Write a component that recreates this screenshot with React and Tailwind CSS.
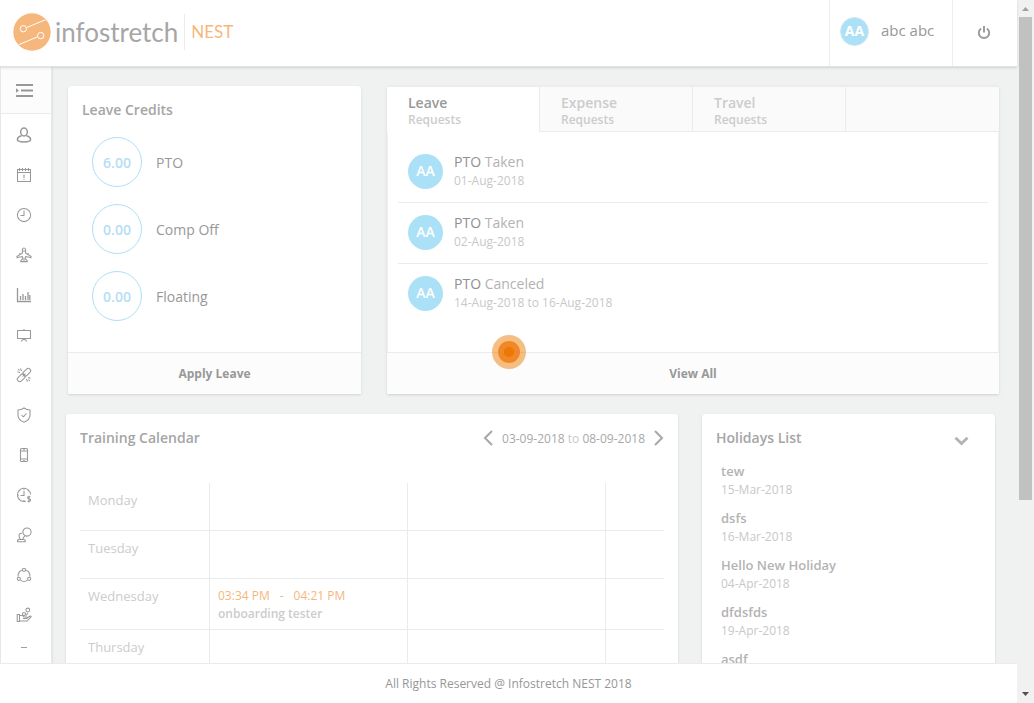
import React from "react";

const iconPaths = {
  Profile: (
    <g strokeWidth="1.5">
      <ellipse cx="8" cy="5" rx="3.3" ry="4" />
      <path d="M5.6 8.8C3 9.6 1.4 10.6 1.4 12.6C1.4 14.4 3 15 8 15S14.6 14.4 14.6 12.6C14.6 10.6 13 9.6 10.4 8.8" />
    </g>
  ),
  Calendar: (
    <>
      <path d="M1.5 2.5H14.5V14.5H1.5ZM1.5 5.5H14.5M8 7.5V11M8 12V13" />
      <path d="M3.5 1V4M6.5 1V4M9.5 1V4M12.5 1V4" />
    </>
  ),
  Timesheet: (
    <>
      <circle cx="8" cy="8" r="6.6" />
      <path d="M8 3.5V8.5H4.5" />
    </>
  ),
  Travel: (
    <>
      <path d="M6.4 6.2V3C6.4 1.8 7.2 1 8 1S9.6 1.8 9.6 3V6.2L15 9.3V10.6L9.6 9.6V12.2L11.2 13.6V14.6H4.8V13.6L6.4 12.2V9.6L1 10.6V9.3ZM8 10.5V15.2" />
      <path d="M6.4 4H9.6M3.8 7.6V6M12.2 7.6V6" />
    </>
  ),
  Reports: (
    <>
      <path d="M1.5 1V14.5H15" strokeWidth="1.3" />
      <path d="M4.5 13V9M7 13V7M9.5 13V9M12 13V5M13.8 13V8" strokeWidth="1.3" />
    </>
  ),
  Desk: <path d="M1.5 3.5H14.5V11.5H1.5ZM8 2V3.5M8 11.5V13M5 14.5L6.5 12.7H9.5L11 14.5" />,
  Links: (
    <>
      <rect x="-4.4" y="-2.4" width="8.8" height="4.8" rx="2.4" transform="translate(10.8 5.2) rotate(-45)" />
      <rect x="-4.4" y="-2.4" width="8.8" height="4.8" rx="2.4" transform="translate(5.2 10.8) rotate(-45)" />
      <path d="M6.5 9.5L9.5 6.5M4 5.5L1.5 4.8M5.5 4L4.5 1.5M3.5 3.5L2 2M12 10.5L14.5 11.2M10.5 12L11.5 14.5M12.5 12.5L14 14" />
    </>
  ),
  Security: (
    <>
      <path d="M8 1C6.3 2.3 4.4 3 2 3V8C2 11.5 4.2 13.8 8 15.2C11.8 13.8 14 11.5 14 8V3C11.6 3 9.7 2.3 8 1Z" />
      <path d="M5.6 8.2L7.4 9.8L10.5 6.5" />
    </>
  ),
  Mobile: (
    <>
      <rect x="4.5" y="1.5" width="7" height="13" rx="1" />
      <path d="M4.5 4H11.5M4.5 12H11.5M7.2 2.8H8.8M7.3 13.5H8.7" />
    </>
  ),
  Payroll: (
    <>
      <path d="M9.8 14.2A6.6 6.6 0 1 1 14.6 7.5M8 3.8V8.5H4.5" />
      <path d="M8 1.5V3M1.5 8H3M8 13V14.5M3.4 3.4L4.2 4.2M12.6 3.4L11.8 4.2" />
      <path d="M14.3 10C13.5 9.3 11.6 9.4 11.6 10.7S14.6 11.6 14.6 13.1S12.3 14.7 11.4 13.8M13 8.8V15.6" />
    </>
  ),
  Feedback: (
    <>
      <circle cx="11" cy="5" r="4.1" />
      <path d="M9 9L7.5 10.5M6 6.2C4 6 3 7.3 3 8.8C3 10.5 4 11 4 12L1.5 13.2V14.8H9.2V13.2L7 12C7 11 7.7 10.6 7.8 9.5M4 12.5H7.2" />
    </>
  ),
  Teams: (
    <>
      <circle cx="8" cy="2.8" r="1.6" />
      <circle cx="2.8" cy="11.8" r="1.6" />
      <circle cx="13.2" cy="11.8" r="1.6" />
      <path d="M5.8 3.2A6 6 0 0 0 2.2 9.6M10.2 3.2A6 6 0 0 1 13.8 9.6M4.4 13.1A6 6 0 0 0 11.6 13.1" />
    </>
  ),
  Benefits: (
    <>
      <path d="M1.2 7.5H3.5V14.5H1.2ZM3.5 8.5H6.5L8 10H10.5C11.5 10 11.5 11.5 10.5 11.5H7M11 11L14.2 9C15.2 8.7 15.4 9.6 14.8 10.2L11 14H3.5" />
      <circle cx="8" cy="7" r="1.6" />
      <circle cx="11.8" cy="3" r="1.9" />
      <path d="M10 8.5L12 6.2" />
    </>
  ),
};

function Icon({ name }) {
  return (
    <svg viewBox="0 0 16 16" className="size-4" fill="none" stroke="currentColor" strokeWidth="1.05" aria-hidden="true">
      {iconPaths[name]}
    </svg>
  );
}

function Logo() {
  return (
    <a href="#home" className="flex items-center">
      <svg viewBox="0 0 38 38" className="size-[38px]" aria-hidden="true">
        <circle cx="19" cy="19" r="18.7" fill="#f6b77d" />
        <g fill="none" stroke="#fff" strokeWidth="1">
          <circle cx="10.3" cy="15.7" r="3.2" />
          <circle cx="27.7" cy="22.6" r="3.2" />
          <path d="M13.4 14.6L32.4 6.8M24.6 23.8L6 31.6" />
        </g>
      </svg>
      <span className="ml-1 font-[Lato,sans-serif] text-[26px] leading-9 text-[#a6a6a6]">infostretch</span>
      <span className="ml-1.5 h-9 border-l border-[#ececec]" />
      <span className="ml-1.5 font-[Lato,sans-serif] text-[17px] leading-9 text-[#f6b77d]">NEST</span>
    </a>
  );
}

function Header() {
  return (
    <header className="z-10 flex h-[67px] shrink-0 items-stretch border-b border-[#dfe3e2] bg-white pl-[13px] shadow-sm">
      <div className="flex flex-1 items-center pb-0.5">
        <Logo />
      </div>
      <button type="button" className="flex w-[123px] items-center border-l border-[#eeeeee] pb-1 pl-2.5">
        <span className="flex size-[29px] items-center justify-center rounded-full border border-[#d6e7ee] bg-[#abe1f6] text-sm font-bold text-white">AA</span>
        <span className="ml-3 pb-0.5 text-[15px] font-medium text-[#979797]">abc abc</span>
      </button>
      <button type="button" aria-label="Log out" className="flex w-[65px] items-center justify-center border-l border-[#eeeeee] pr-0.5 text-[#9b9b9b]">
        <svg viewBox="0 0 14 14" className="size-3.5" fill="none" stroke="currentColor" strokeWidth="1.9" aria-hidden="true">
          <path d="M4 2.6A5.2 5.2 0 1 0 10 2.6M7 0V6.5" />
        </svg>
      </button>
    </header>
  );
}

function Sidebar() {
  return (
    <nav aria-label="Main" className="flex w-[52px] shrink-0 flex-col overflow-hidden border-x border-[#e6e8e8] bg-white pr-1 text-[#989898] shadow-sm">
      <button type="button" aria-label="Toggle menu" className="-mr-1 flex h-[47px] shrink-0 items-center justify-center border-b border-[#ebebeb] bg-[#fcfcfc] pr-1">
        <svg viewBox="0 0 17 13" className="h-[13px] w-[17px]" fill="none" stroke="currentColor" strokeWidth="1.9" aria-hidden="true">
          <path d="M0 1H17M5 6.5H17M0 12H17" />
          <path d="M0 4.2L3 6.5L0 8.8Z" fill="currentColor" stroke="none" />
        </svg>
      </button>
      <ul className="pt-px">
        {Object.keys(iconPaths).map((name) => (
          <li key={name}>
            <a href={"#" + name.toLowerCase()} aria-label={name} className="flex h-10 items-center justify-center">
              <Icon name={name} />
            </a>
          </li>
        ))}
        <li>
          <a href="#more" aria-label="More" className="flex h-6 items-center justify-center">
            <span className="w-1.5 border-t border-[#a0a0a0]" />
          </a>
        </li>
      </ul>
    </nav>
  );
}

const cardClass = "flex flex-col rounded-t bg-white shadow-sm";
const headingClass = "text-sm leading-5 font-semibold text-[#a5a5a5]";
const footerClass = "flex h-[42px] items-center justify-center border-t border-[#ebebeb] bg-[#fcfcfc] text-xs font-bold text-[#989898]";

const credits = [
  ["6.00", "PTO"],
  ["0.00", "Comp Off"],
  ["0.00", "Floating"],
];

function LeaveCredits() {
  return (
    <section className={cardClass}>
      <div className="flex-1 px-3.5 pt-3.5 pb-[31px]">
        <h2 className={headingClass}>Leave Credits</h2>
        <ul className="mt-[17px] flex flex-col gap-[17px] pl-2.5">
          {credits.map(([value, label]) => (
            <li key={label} className="flex items-center">
              <span className="flex size-[50px] items-center justify-center rounded-full border border-[#abe1f6] pt-0.5 text-sm font-semibold text-[#b5def5]">{value}</span>
              <span className="ml-3.5 pt-0.5 text-sm text-[#989898]">{label}</span>
            </li>
          ))}
        </ul>
      </div>
      <a href="#apply" className={footerClass}>Apply Leave</a>
    </section>
  );
}

const requests = [
  ["Taken", "01-Aug-2018"],
  ["Taken", "02-Aug-2018"],
  ["Canceled", "14-Aug-2018 to 16-Aug-2018"],
];

function Requests() {
  return (
    <section className="relative flex flex-col bg-white shadow-sm">
      <div role="tablist" className="flex h-[46px] border-t border-[#ececec]">
        {["Leave", "Expense", "Travel"].map((tab, i) => (
          <button
            key={tab}
            type="button"
            role="tab"
            aria-selected={i === 0}
            className={
              "flex w-[153px] flex-col items-start border-r border-[#ebebeb] pt-[7px] pl-[21px] text-left font-semibold " +
              (i === 0 ? "bg-white text-[#999999]" : "border-b bg-[#fafafa] text-[#cccccc]")
            }
          >
            <span className="text-sm leading-[17px]">{tab}</span>
            <span className="text-xs leading-[17px] text-[#cccccc]">Requests</span>
          </button>
        ))}
        <div className="flex-1 border-b border-[#ebebeb] bg-[#fafafa]" />
      </div>
      <ul className="flex-1 border-x border-[#f0f0f0] px-2.5 pt-2.5">
        {requests.map(([status, date]) => (
          <li key={date} className="flex h-[61px] items-center border-b border-[#ebebeb] pb-0.5 pl-2.5 last:border-transparent">
            <span className="flex size-[35px] items-center justify-center rounded-full bg-[#abe1f6] text-sm font-semibold text-white">AA</span>
            <div className="ml-[11px]">
              <p className="text-sm leading-5 text-[#b3b3b3]">
                <span className="font-medium text-[#8f8f8f]">PTO</span> {status}
              </p>
              <p className="text-xs leading-[18px] text-[#c8c8c8]">{date}</p>
            </div>
          </li>
        ))}
      </ul>
      <a href="#all" className={footerClass}>View All</a>
      <span className="pointer-events-none absolute bottom-[25px] left-[105px] flex size-[34px] items-center justify-center rounded-full bg-[#f07d0a]/50">
        <span className="flex size-[22px] items-center justify-center rounded-full bg-[#f08828]">
          <span className="size-2.5 rounded-full bg-[#ee7507]" />
        </span>
      </span>
    </section>
  );
}

const days = ["Monday", "Tuesday", "Wednesday", "Thursday"];

function Chevron({ path }) {
  return (
    <svg viewBox="0 0 10 16" className="h-4 w-2.5" fill="none" stroke="currentColor" strokeWidth="2" aria-hidden="true">
      <path d={path} />
    </svg>
  );
}

function TrainingCalendar() {
  return (
    <section className={cardClass + " px-3.5 pt-3.5"}>
      <div className="flex items-center justify-between">
        <h2 className={headingClass}>Training Calendar</h2>
        <div className="flex items-center gap-[9px] text-xs text-[#a8a8a8]">
          <button type="button" aria-label="Previous week"><Chevron path="M9 1L2 8L9 15" /></button>
          <span className="pt-0.5 font-medium">
            03-09-2018 <span className="font-normal text-[#c8c8c8]">to</span> 08-09-2018
          </span>
          <button type="button" aria-label="Next week"><Chevron path="M1 1L8 8L1 15" /></button>
        </div>
      </div>
      <table className="mt-[35px] w-full table-fixed border-separate border-spacing-0 text-left">
        <colgroup>
          <col className="w-[130px]" />
          <col className="w-[198px]" />
          <col className="w-[198px]" />
          <col />
        </colgroup>
        <tbody>
          {days.map((day) => (
            <tr key={day} className="h-12 align-top">
              <th scope="row" className="border-r border-b border-[#ebebeb] px-2 py-[7px] text-[13px] leading-5 font-normal text-[#cccccc]">{day}</th>
              <td className="border-r border-b border-[#ebebeb] px-2 pt-2 pb-1.5 text-xs leading-[18px]">
                {day === "Wednesday" && (
                  <>
                    <p className="flex gap-2.5 font-medium text-[#f6b77d]">
                      <span>03:34 PM</span>
                      <span>-</span>
                      <span>04:21 PM</span>
                    </p>
                    <p className="font-semibold text-[#cccccc]">onboarding tester</p>
                  </>
                )}
              </td>
              <td className="border-r border-b border-[#ebebeb]" />
              <td className="border-b border-[#ebebeb]" />
            </tr>
          ))}
        </tbody>
      </table>
    </section>
  );
}

const holidays = [
  ["tew", "15-Mar-2018"],
  ["dsfs", "16-Mar-2018"],
  ["Hello New Holiday", "04-Apr-2018"],
  ["dfdsfds", "19-Apr-2018"],
  ["asdf", null],
];

function Holidays() {
  return (
    <section className={cardClass + " px-3.5 pt-3.5"}>
      <div className="flex items-center justify-between pr-3">
        <h2 className={headingClass}>Holidays List</h2>
        <button type="button" aria-label="Collapse holidays" className="pt-1.5 text-[#b3b3b3]">
          <svg viewBox="0 0 15 10" className="h-2.5 w-[15px]" fill="none" stroke="currentColor" strokeWidth="2.8" aria-hidden="true">
            <path d="M1.5 1.8L7.5 7.5L13.5 1.8" />
          </svg>
        </button>
      </div>
      <ul className="mt-3.5 flex flex-col gap-2.5 pl-[5px]">
        {holidays.map(([name, date]) => (
          <li key={name}>
            <p className="text-[13px] leading-[18px] font-semibold text-[#b3b3b3]">{name}</p>
            {date && <p className="text-xs leading-[19px] text-[#c8c8c8]">{date}</p>}
          </li>
        ))}
      </ul>
    </section>
  );
}

function Scrollbar() {
  return (
    <div className="flex w-[17px] shrink-0 flex-col bg-[#f1f1f1]">
      <button type="button" aria-label="Scroll up" className="flex h-[17px] items-center justify-center">
        <svg viewBox="0 0 7 4" className="h-1 w-[7px]" fill="#a0a0a0" aria-hidden="true"><path d="M0 4L3.5 0L7 4Z" /></svg>
      </button>
      <div className="flex-1">
        <div className="mx-auto h-[72.4%] w-[13px] bg-[#c1c1c1]" />
      </div>
      <button type="button" aria-label="Scroll down" className="flex h-[19px] items-center justify-center">
        <svg viewBox="0 0 7 4" className="h-1 w-[7px]" fill="#505050" aria-hidden="true"><path d="M0 0L3.5 4L7 0Z" /></svg>
      </button>
    </div>
  );
}

export default function App() {
  return (
    <div className="flex h-screen overflow-hidden bg-white font-['Open_Sans','Noto_Sans',sans-serif]">
      <div className="flex min-w-0 flex-1 flex-col">
        <Header />
        <div className="flex min-h-0 flex-1 bg-[#f0f2f2]">
          <Sidebar />
          <main className="min-w-0 flex-1 overflow-hidden pt-[19px]">
            <div className="grid grid-cols-[293fr_612fr] gap-[26px] pr-[18px] pl-4">
              <LeaveCredits />
              <Requests />
            </div>
            <div className="mt-5 grid grid-cols-[612fr_293fr] gap-6 pr-[22px] pl-3.5">
              <TrainingCalendar />
              <Holidays />
            </div>
          </main>
        </div>
        <footer className="flex h-10 shrink-0 items-center justify-center border-t border-[#ebebeb] bg-white text-xs text-[#979797]">
          All Rights Reserved @ Infostretch NEST 2018
        </footer>
      </div>
      <Scrollbar />
    </div>
  );
}
